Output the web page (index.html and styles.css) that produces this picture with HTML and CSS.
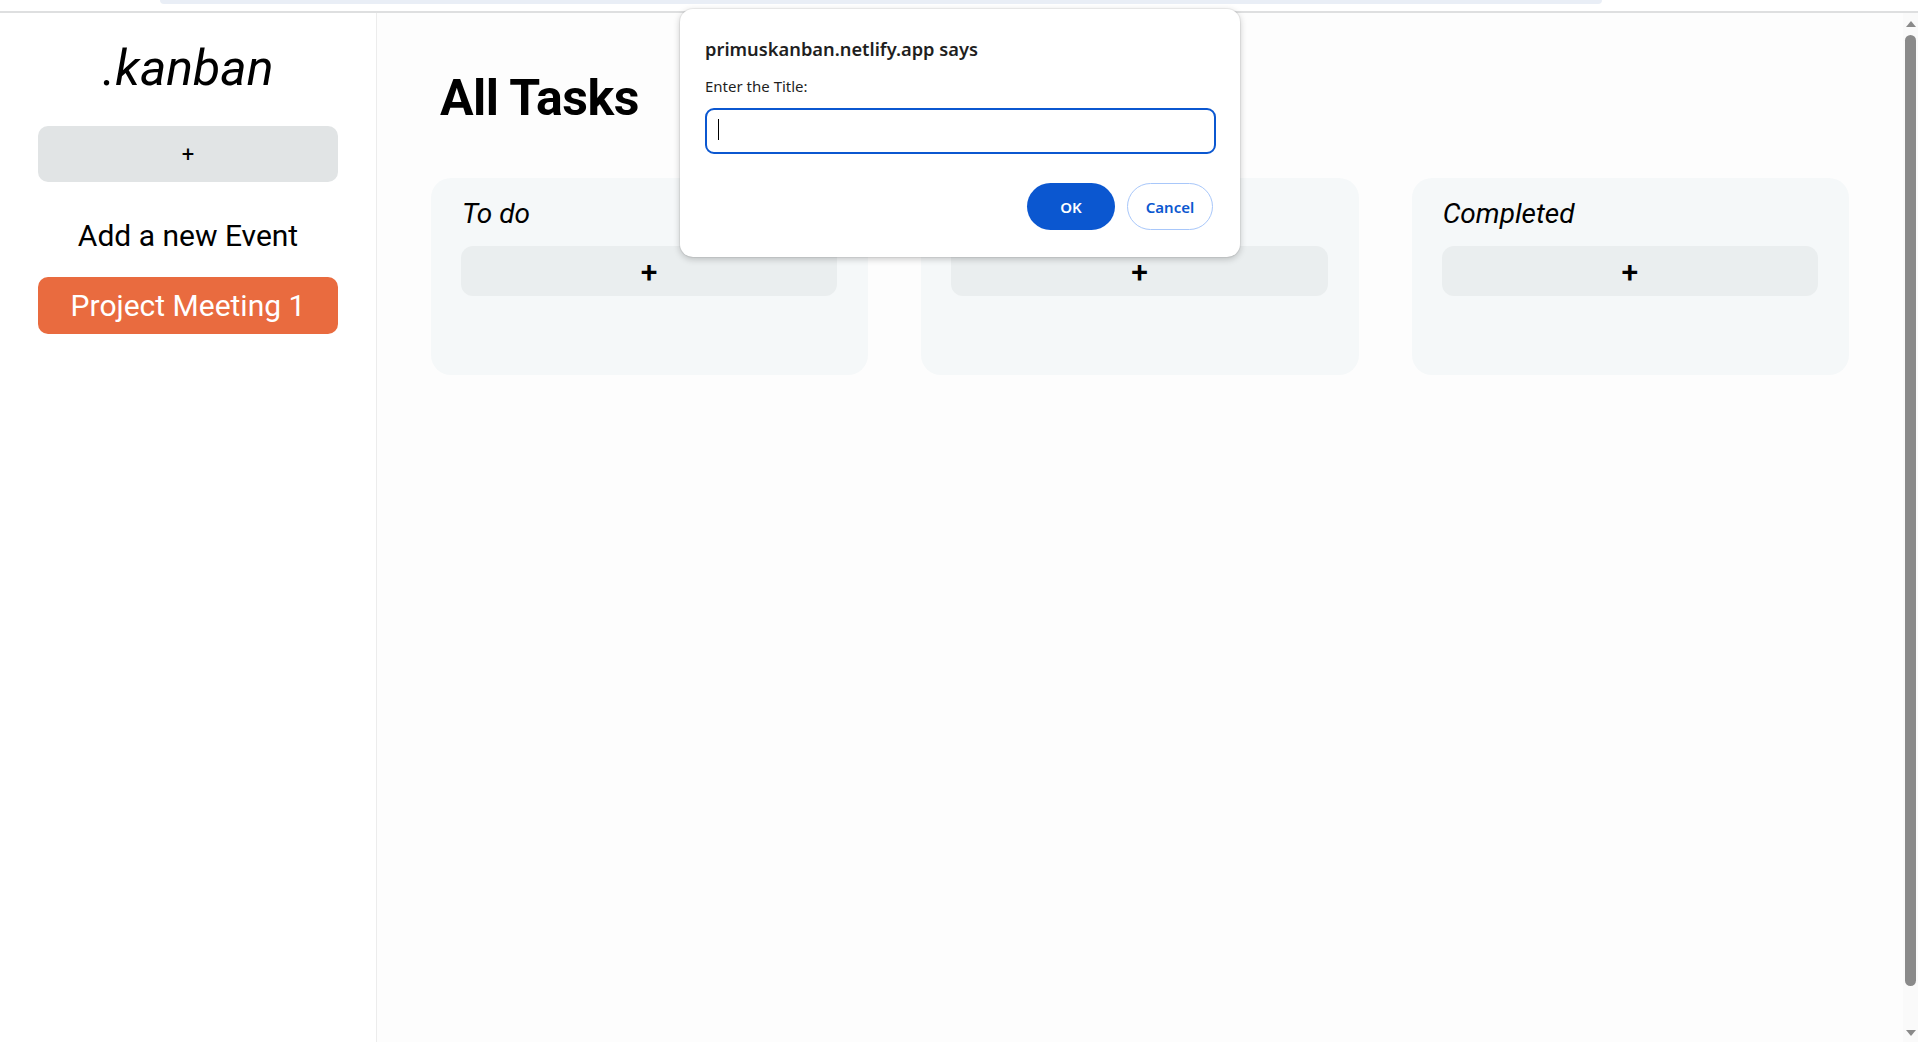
FILE: index.html
```html
<!DOCTYPE html>
<html lang="en">
<head>
<meta charset="utf-8">
<title>.kanban</title>
<link rel="stylesheet" href="styles.css">
</head>
<body>
<div class="chrome">
  <div class="chrome-pill"></div>
</div>
<div class="viewport">
  <div class="app">
    <aside class="sidebar">
      <h1 class="logo">.kanban</h1>
      <button class="side-add">+</button>
      <p class="side-label">Add a new Event</p>
      <button class="event">Project Meeting 1</button>
    </aside>
    <main class="main">
      <h2 class="page-title">All Tasks</h2>
      <div class="columns">
        <section class="column">
          <h3 class="col-title">To do</h3>
          <button class="col-add">+</button>
        </section>
        <section class="column">
          <h3 class="col-title">In progress</h3>
          <button class="col-add">+</button>
        </section>
        <section class="column">
          <h3 class="col-title">Completed</h3>
          <button class="col-add">+</button>
        </section>
      </div>
    </main>
  </div>
  <div class="scrollbar">
    <div class="arrow up"></div>
    <div class="thumb"></div>
    <div class="arrow down"></div>
  </div>
</div>

<div class="dialog">
  <div class="dlg-title">primuskanban.netlify.app says</div>
  <div class="dlg-label">Enter the Title:</div>
  <div class="dlg-input"><span class="caret"></span></div>
  <div class="dlg-actions">
    <button class="btn-ok">OK</button>
    <button class="btn-cancel">Cancel</button>
  </div>
</div>
</body>
</html>
```
FILE: styles.css
```css
* { box-sizing: border-box; }
html, body { margin: 0; padding: 0; height: 100%; }
body {
  font-family: Roboto, "Liberation Sans", sans-serif;
  background: #ffffff;
  overflow: hidden;
  position: relative;
}
.chrome {
  height: 13px;
  background: #ffffff;
  border-bottom: 2px solid #dedfe0;
  padding: 0 316px 0 160px;
}
.chrome-pill {
  height: 4px;
  background: #e9eef6;
  border-radius: 0 0 8px 8px;
}
.viewport {
  display: flex;
  height: 1029px;
}
.app {
  flex: 1;
  display: flex;
  min-width: 0;
}
.sidebar {
  width: 377px;
  flex: none;
  background: #ffffff;
  border-right: 1px solid #ececec;
  padding: 26px 38px 0 38px;
  display: flex;
  flex-direction: column;
  align-items: stretch;
  text-align: center;
}
.logo {
  margin: 0;
  font-size: 50px;
  font-weight: 400;
  font-style: italic;
  line-height: 58px;
  color: #000;
}
.side-add {
  margin-top: 29px;
  height: 56px;
  border: none;
  border-radius: 10px;
  background: #e1e4e5;
  font-family: Roboto, sans-serif;
  font-size: 22px;
  color: #000;
}
.side-label {
  margin: 36px 0 0;
  font-size: 30px;
  line-height: 35px;
  color: #000;
}
.event {
  margin-top: 24px;
  height: 57px;
  border: none;
  border-radius: 10px;
  background: #e96b3f;
  color: #ffffff;
  font-family: Roboto, sans-serif;
  font-size: 30px;
}
.main {
  flex: 1;
  background: #fdfdfd;
  padding: 0 54px;
}
.page-title {
  margin: 56px 0 0 9px;
  font-size: 50px;
  font-weight: 700;
  letter-spacing: -0.5px;
  line-height: 59px;
  color: #000;
}
.columns {
  margin-top: 50px;
  display: flex;
  gap: 53px;
}
.column {
  flex: 1;
  height: 197px;
  background: #f5f8f9;
  border-radius: 20px;
  padding: 20px 31px 0 30px;
}
.col-title {
  margin: 0 0 0 1px;
  font-size: 28px;
  font-style: italic;
  font-weight: 400;
  line-height: 32px;
  color: #000;
}
.col-add {
  margin-top: 16px;
  width: 100%;
  height: 50px;
  border: none;
  border-radius: 12px;
  background: #eaeeef;
  font-family: Roboto, sans-serif;
  font-size: 30px;
  font-weight: 500;
  color: #000;
}
.scrollbar {
  width: 15px;
  flex: none;
  background: #fafafa;
  display: flex;
  flex-direction: column;
  align-items: center;
  padding: 8px 0 6px;
}
.arrow {
  width: 0;
  height: 0;
  border-left: 5px solid transparent;
  border-right: 5px solid transparent;
}
.arrow.up { border-bottom: 6px solid #8a8a8a; }
.arrow.down { border-top: 6px solid #8a8a8a; margin-top: auto; }
.thumb {
  width: 11px;
  height: 951px;
  margin-top: 8px;
  flex: none;
  background: #8a8a8a;
  border-radius: 6px;
}
.dialog {
  position: absolute;
  left: 680px;
  top: 9px;
  width: 560px;
  height: 248px;
  background: #ffffff;
  border-radius: 13px;
  box-shadow: 0 2px 7px rgba(0,0,0,0.22), 0 0 0 1px rgba(0,0,0,0.05);
  padding: 28px 24px 0 25px;
  font-family: "Noto Sans", "Open Sans", sans-serif;
}
.dlg-title {
  font-size: 18.3px;
  font-weight: 600;
  line-height: 24px;
  color: #1f1f1f;
}
.dlg-label {
  margin-top: 15px;
  font-size: 15px;
  line-height: 20px;
  color: #1f1f1f;
}
.dlg-input {
  margin-top: 12px;
  height: 46px;
  border: 2.5px solid #0b57d0;
  border-radius: 9px;
  padding: 9px 0 0 11px;
}
.caret {
  display: block;
  width: 1px;
  height: 21px;
  background: #000;
}
.dlg-actions {
  margin-top: 29px;
  display: flex;
  justify-content: flex-end;
  gap: 12px;
  padding-right: 3px;
}
.btn-ok, .btn-cancel {
  height: 47px;
  border-radius: 24px;
  font-family: "Noto Sans", "Open Sans", sans-serif;
  font-size: 15px;
  font-weight: 600;
}
.btn-ok {
  width: 88px;
  border: none;
  background: #0b57d0;
  color: #ffffff;
}
.btn-cancel {
  width: 86px;
  border: 1px solid #a8c7fa;
  background: #ffffff;
  color: #0b57d0;
}
```
